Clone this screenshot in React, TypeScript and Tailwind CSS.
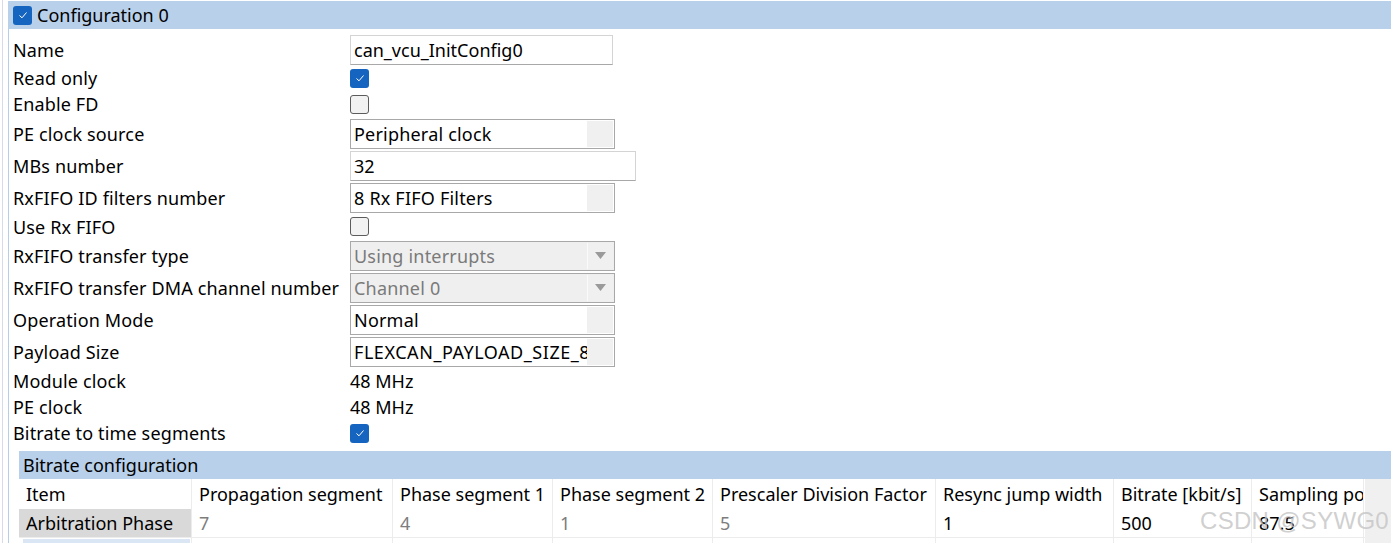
const FONT = "font-['Noto_Sans',_'Liberation_Sans',_sans-serif]";

function Check({ checked }: { checked: boolean }) {
  if (checked) {
    return (
      <div className="w-[19px] h-[19px] shrink-0 rounded-[3px] bg-[#1565c0] flex items-center justify-center">
        <svg width="12" height="12" viewBox="0 0 12 12">
          <polyline points="2.5,6.5 5,8.8 9.5,3.5" fill="none" stroke="white" strokeWidth="1" />
        </svg>
      </div>
    );
  }
  return <div className="w-[19px] h-[19px] shrink-0 rounded-[3px] border border-[#5c5c5c] bg-[#f2f2f2]" />;
}

function TextBox({ value, width }: { value: string; width: string }) {
  return (
    <div className={`${width} h-[30px] border border-[#d4d4d4] border-b-[#a8a8a8] bg-white flex items-center pl-[3px]`}>
      {value}
    </div>
  );
}

function Combo({ value, disabled, wide }: { value: string; disabled?: boolean; wide?: boolean }) {
  return (
    <div
      className={`relative w-[265px] h-[30px] border border-[#a8a8a8] flex items-center overflow-hidden ${
        disabled ? 'bg-[#efefef] text-[#7a7a7a]' : 'bg-white text-black'
      }`}
    >
      <div className={`whitespace-nowrap pl-[3px] ${wide ? 'tracking-[0.55px]' : 'tracking-[0.2px]'}`}>{value}</div>
      <div
        className={`absolute right-[1px] top-[1px] bottom-[1px] w-[26px] bg-[#f0f0f0] flex items-center justify-center ${
          disabled ? 'border-l border-[#fafafa]' : ''
        }`}
      >
        {disabled && (
          <svg width="11" height="7" viewBox="0 0 11 7">
            <polygon points="0,0 11,0 5.5,7" fill="#9a9a9a" />
          </svg>
        )}
      </div>
    </div>
  );
}

type Row = { label: string; h: string; field: React.ReactNode };

const rows: Row[] = [
  { label: 'Name', h: 'h-[31px]', field: <TextBox value="can_vcu_InitConfig0" width="w-[263px]" /> },
  { label: 'Read only', h: 'h-[26px]', field: <Check checked /> },
  { label: 'Enable FD', h: 'h-[26px]', field: <Check checked={false} /> },
  { label: 'PE clock source', h: 'h-[33px]', field: <Combo value="Peripheral clock" /> },
  { label: 'MBs number', h: 'h-[32px]', field: <TextBox value="32" width="w-[286px]" /> },
  { label: 'RxFIFO ID filters number', h: 'h-[32px]', field: <Combo value="8 Rx FIFO Filters" /> },
  { label: 'Use Rx FIFO', h: 'h-[25px]', field: <Check checked={false} /> },
  { label: 'RxFIFO transfer type', h: 'h-[33px]', field: <Combo value="Using interrupts" disabled /> },
  { label: 'RxFIFO transfer DMA channel number', h: 'h-[31px]', field: <Combo value="Channel 0" disabled /> },
  { label: 'Operation Mode', h: 'h-[34px]', field: <Combo value="Normal" /> },
  { label: 'Payload Size', h: 'h-[30px]', field: <Combo value="FLEXCAN_PAYLOAD_SIZE_8" wide /> },
  { label: 'Module clock', h: 'h-[28px]', field: <span>48 MHz</span> },
  { label: 'PE clock', h: 'h-[24px]', field: <span>48 MHz</span> },
  { label: 'Bitrate to time segments', h: 'h-[28px]', field: <Check checked /> },
];

const cols = [
  'Item',
  'Propagation segment',
  'Phase segment 1',
  'Phase segment 2',
  'Prescaler Division Factor',
  'Resync jump width',
  'Bitrate [kbit/s]',
  'Sampling point',
];

const values: { v: string; dim: boolean }[] = [
  { v: '7', dim: true },
  { v: '4', dim: true },
  { v: '1', dim: true },
  { v: '5', dim: true },
  { v: '1', dim: false },
  { v: '500', dim: false },
  { v: '87.5', dim: false },
];

const grid = 'grid grid-cols-[173px_201px_160px_160px_223px_178px_138px_112px]';

export default function App() {
  return (
    <div className={`${FONT} text-[18px] leading-none text-black bg-white w-[1391px] h-[543px] overflow-hidden flex relative`}>
      <div className="w-[2px] shrink-0" />
      <div className="w-px shrink-0 bg-[#d3dce8]" />
      <div className="w-[5px] shrink-0" />
      <div className="flex-1 flex flex-col pt-px min-h-0">
        <div className="h-[28px] shrink-0 bg-[#b8d0ea] flex items-center gap-[5px] pl-[5px]">
          <Check checked />
          <span>Configuration 0</span>
        </div>
        <div className="shrink-0 border-l border-[#b8cde6] pl-[4px] pt-[5px]">
          {rows.map((r) => (
            <div key={r.label} className={`${r.h} flex items-center`}>
              <div className="w-[337px] whitespace-nowrap tracking-[0.15px]">{r.label}</div>
              {r.field}
            </div>
          ))}
          <div className="ml-[6px] mt-[4px]">
            <div className="h-[28px] bg-[#b8d0ea] flex items-center pl-[4px]">Bitrate configuration</div>
            <div className="flex">
              <div className="flex-1 overflow-hidden">
                <div className={`${grid} h-[30px]`}>
                  {cols.map((c) => (
                    <div key={c} className="border-r border-[#ececec] pl-[7px] flex items-center whitespace-nowrap overflow-hidden">
                      {c}
                    </div>
                  ))}
                </div>
                <div className={`${grid} h-[29px] border-b border-[#ececec]`}>
                  <div className="bg-[#d9d9d9] pl-[7px] flex items-center border-r border-[#ececec]">Arbitration Phase</div>
                  {values.map((x, i) => (
                    <div
                      key={i}
                      className={`pl-[7px] flex items-center border-r border-[#ececec] ${x.dim ? 'text-[#7d7d7d]' : 'text-black'}`}
                    >
                      {x.v}
                    </div>
                  ))}
                </div>
                <div className={`${grid} h-[10px]`}>
                  <div className="pl-[4px] pt-[1px] border-r border-[#ececec]">
                    <div className="h-full w-[167px] bg-[#dbe6f4]" />
                  </div>
                  {values.map((_, i) => (
                    <div key={i} className="border-r border-[#ececec]" />
                  ))}
                </div>
              </div>
              <div className="w-[26px] bg-[#f0f0f0]" />
            </div>
          </div>
        </div>
      </div>
      <span className="absolute left-[1200px] top-[509px] whitespace-nowrap text-[24px] tracking-[0.3px] text-[#c4c4c4]/80 font-['Liberation_Sans',_sans-serif]">
        CSDN @SYWG0
      </span>
    </div>
  );
}
